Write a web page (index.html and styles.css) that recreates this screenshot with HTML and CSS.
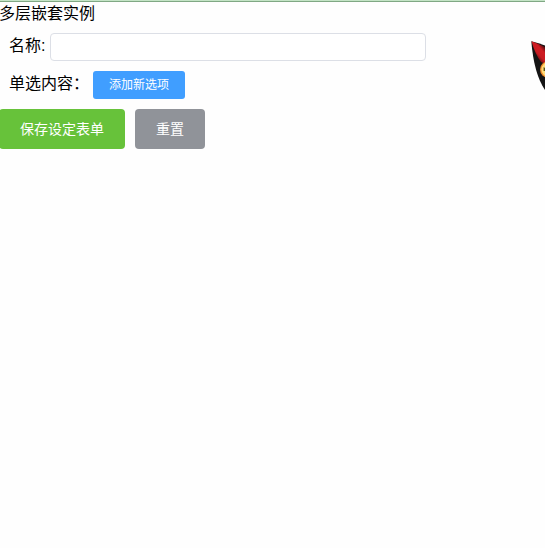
FILE: index.html
```html
<!DOCTYPE html>
<html lang="zh-CN">
<head>
<meta charset="utf-8">
<title>多层嵌套实例</title>
<link rel="stylesheet" href="styles.css">
</head>
<body>
<main class="page">
  <div class="title">多层嵌套实例</div>
  <form class="form">
    <div class="row">
      <label class="label name-label" for="name">名称:</label>
      <input class="input" id="name" type="text">
    </div>
    <div class="row">
      <span class="label option-label">单选内容：</span>
      <button class="btn small primary" type="button">添加新选项</button>
    </div>
    <div class="actions">
      <button class="btn success" type="button">保存设定表单</button>
      <button class="btn info" type="button">重置</button>
    </div>
  </form>
</main>
<svg class="mascot" viewBox="0 0 14 50" width="14" height="50">
  <defs>
    <linearGradient id="red" gradientUnits="userSpaceOnUse" x1="3" y1="17" x2="14" y2="7">
      <stop offset="0" stop-color="#4c0a0d"/>
      <stop offset="0.35" stop-color="#c81c22"/>
      <stop offset="0.7" stop-color="#d01c22"/>
      <stop offset="1" stop-color="#480a0c"/>
    </linearGradient>
  </defs>
  <path d="M0.3 1.3 Q8 3 14 5.5 V50 Q3 34 0.3 1.3Z" fill="#141414"/>
  <path d="M0.5 1.3 Q8 4 14 7 V24 L10 22 Q4 14 0.5 1.3Z" fill="url(#red)"/>
  <circle cx="17" cy="29.5" r="8" fill="#ee8b2c"/>
  <circle cx="18" cy="29.5" r="7.6" fill="#ffdc78"/>
  <path d="M12.6 27 L14 28 V31 L12.6 31Z" fill="#55501c"/>
</svg>
</body>
</html>
```
FILE: styles.css
```css
* { box-sizing: border-box; }
body {
  margin: 0;
  height: 548px;
  overflow: hidden;
  position: relative;
  background: #fefefe;
  color: #000;
  font: 16px/22px "Liberation Sans", "Noto Sans CJK SC", sans-serif;
  border-top: 1px solid #c4e4c6;
}
.page { border-top: 1px solid #80a884; }
.title { height: 26px; line-height: 24px; margin-left: -1px; }
.row { display: flex; align-items: center; height: 38px; padding-left: 9px; }
.label { white-space: nowrap; padding-bottom: 2px; }
.name-label { width: 41px; }
.option-label { width: 84px; }
.input {
  width: 376px;
  height: 28px;
  margin: 0;
  border: 1px solid #dcdfe6;
  border-radius: 4px;
  background: #fff;
  padding: 0 10px;
}
.actions { display: flex; gap: 10px; padding-top: 5px; }
.btn {
  height: 40px;
  margin: 0;
  padding: 0 20px;
  border: 0;
  border-radius: 4px;
  color: #fff;
  font: 14px/20px "Liberation Sans", "Noto Sans CJK SC", sans-serif;
  white-space: nowrap;
}
.small { width: 92px; height: 28px; padding: 0; border-radius: 3px; font-size: 12px; }
.primary { background: #409eff; }
.success { width: 126px; margin-left: -1px; background: #67c23a; }
.info { width: 70px; background: #909399; }
.mascot { position: absolute; right: 0; top: 39px; }
```
